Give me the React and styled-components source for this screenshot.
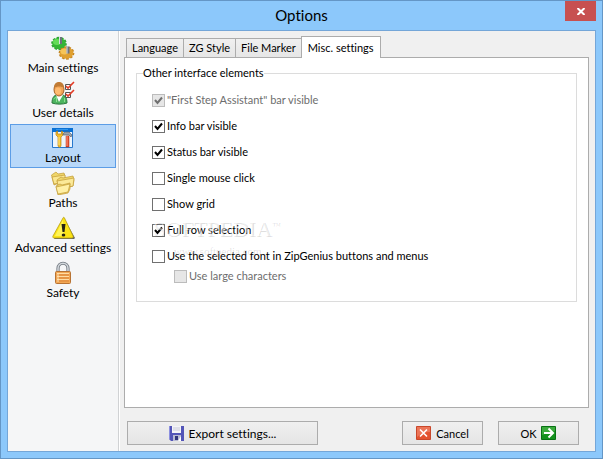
import React, { useState } from 'react'
import styled, { createGlobalStyle, css } from 'styled-components'

const GlobalStyle = createGlobalStyle`
  * {
    box-sizing: border-box;
  }
  body {
    margin: 0;
    font-family: Lato, 'Open Sans', sans-serif;
    font-size: 11px;
    font-variant-ligatures: none;
    color: #000;
  }
  button {
    font: inherit;
    font-variant-ligatures: none;
    color: inherit;
  }
`

const Window = styled.div`
  display: flex;
  flex-direction: column;
  min-height: 100vh;
  padding: 0 6px 6px;
  border: 1px solid #6496c6;
  background-color: #8cc8fb;
`

const TitleBar = styled.header`
  display: grid;
  grid-template-columns: 31px 1fr 31px;
  align-items: start;
  height: 29px;
`

const Title = styled.h1`
  grid-column: 2;
  margin: 0;
  font-size: 15px;
  font-weight: normal;
  line-height: 29px;
  text-align: center;
`

const CloseButton = styled.button`
  display: grid;
  place-items: center;
  height: 20px;
  padding: 0;
  border: 0;
  background-color: #c75050;
`

const Client = styled.div`
  flex: 1;
  display: flex;
  border: 1px solid #74a6d8;
  background-color: #f0f0f0;
`

const Sidebar = styled.nav`
  display: flex;
  flex-direction: column;
  gap: 1px;
  width: 111px;
  padding: 3px 2px;
  border-right: 1px solid #d0d2d4;
  background-color: #f5f6f7;
`

const NavItem = styled.button`
  display: flex;
  flex-direction: column;
  align-items: center;
  padding: 1px 0;
  border: 1px solid transparent;
  background: none;
  font-size: 12px;
  line-height: 16px;
  white-space: nowrap;

  ${props => props.$selected && css`
    border-color: #5c9de6;
    background-color: #b8d8f9;
  `}
`

const Main = styled.main`
  flex: 1;
  display: flex;
  flex-direction: column;
  padding: 5px 6px 6px 4px;
  border-left: 1px solid #fff;
`

const TabList = styled.div`
  display: flex;
  align-items: flex-end;
  padding-left: 2px;
`

const Tab = styled.button`
  height: 19px;
  margin-right: -1px;
  padding: 0 5px;
  border: 1px solid #acacac;
  border-bottom: 0;
  background: linear-gradient(#f0f0f0, #e6e6e6);
  line-height: 18px;
  white-space: nowrap;

  ${props => props.$selected && css`
    z-index: 1;
    height: 22px;
    margin-bottom: -1px;
    padding: 0 6px;
    background: #fff;
  `}
`

const Panel = styled.div`
  flex: 1;
  padding: 7px 11px;
  border: 1px solid #acacac;
  background-color: #fff;
`

const Group = styled.fieldset`
  position: relative;
  min-height: 237px;
  margin: 0;
  padding: 11px 15px;
  border: 1px solid #dcdcdc;
`

const Legend = styled.legend`
  margin-left: -9px;
  padding: 0;
  line-height: 16px;
`

const OptionList = styled.div`
  display: flex;
  flex-direction: column;
  align-items: flex-start;
  gap: 10px;
`

const SubOptions = styled.div`
  padding: 4px 0 0 22px;
`

const Option = styled.label`
  display: flex;
  align-items: center;
  gap: 2px;
  line-height: 16px;
  color: ${props => (props.$disabled ? '#6d6d6d' : '#000')};
`

const Box = styled.span`
  display: grid;

  > * {
    grid-area: 1 / 1;
  }
  svg {
    pointer-events: none;
    visibility: hidden;
  }
  input:checked + svg {
    visibility: visible;
  }
`

const Tick = styled.input`
  appearance: none;
  width: 13px;
  height: 13px;
  margin: 0;
  border: 1px solid #707070;
  background-color: #fff;

  &:disabled {
    border-color: #bcbcbc;
    background-color: #e6e6e6;
  }
`

const Watermark = styled.div`
  position: absolute;
  top: 136px;
  left: 16px;
  font-family: 'Liberation Serif', serif;
  font-size: 22px;
  line-height: 24px;
  text-align: center;
  color: rgba(255, 255, 255, 0.5);
  text-shadow: 1px 1px 0 rgba(0, 0, 0, 0.14);
  pointer-events: none;

  sup {
    font-size: 9px;
    line-height: 9px;
  }
  small {
    display: block;
    font-size: 11px;
    line-height: 18px;
  }
`

const Footer = styled.footer`
  display: flex;
  gap: 15px;
  padding: 13px 10px 0 3px;
`

const Button = styled.button`
  display: flex;
  align-items: center;
  justify-content: center;
  gap: 4px;
  flex: ${props => (props.$wide ? '0 1 191px' : '0 0 81px')};
  height: 24px;
  margin-right: ${props => (props.$wide ? 'auto' : '0')};
  padding: 0;
  border: 1px solid #acacac;
  background: linear-gradient(#f0f0f0, #e5e5e5);
  font-size: ${props => (props.$wide ? '12px' : '11px')};
`

const Icon = ({ size = 24, children }) => (
  <svg width={size} height={size} viewBox={`0 0 ${size} ${size}`} aria-hidden="true">
    {children}
  </svg>
)

const Gear = ({ x, y, fill, edge, light }) => (
  <g transform={`translate(${x} ${y})`}>
    {[0, 36, 72, 108, 144].map(angle => (
      <rect key={angle} x="-7.8" y="-1.4" width="15.6" height="2.8" fill={edge} transform={`scale(1 .85) rotate(${angle + 10})`} />
    ))}
    <ellipse rx="6.8" ry="5.8" fill={fill} />
    <ellipse cx="-2" cy="-1.5" rx="4" ry="3" fill={light} />
    <rect x="0" y="-6.5" width="3" height="7" fill="#6d727c" />
    <rect x="0" y="-6.5" width="1" height="7" fill="#d9dce5" />
  </g>
)

const GearsIcon = () => (
  <Icon>
    <Gear x={8} y={7.5} fill="#35b536" edge="#2da334" light="#63dc58" />
    <Gear x={15.5} y={17} fill="#e0a030" edge="#c3831f" light="#f6c457" />
  </Icon>
)

const UserIcon = () => (
  <Icon>
    <path d="M1 22c0-5 2-8 5-8h5c3 0 5 3 5 8-4 1.500-11 1.500-15 0z" fill="#4cb45f" stroke="#2b783d" />
    <path d="M5 14l3 7 4-7z" fill="#fff" />
    <path d="M2.500 18l3-2v5M13.500 21v-4" fill="none" stroke="#8bdd91" />
    <ellipse cx="8" cy="8.500" rx="5" ry="6.500" fill="#f2a355" stroke="#a76327" />
    <path d="M3 7c0-4 2-6 5-6s5 2 5 6c-3-2-7-2-10 0z" fill="#c17b35" />
    <ellipse cx="7" cy="10" rx="3" ry="3.500" fill="#ffbb70" />
    <path d="M14.500 3.500h5v5h-5zM14.500 11.500h5v5h-5z" fill="#fff" stroke="#555" />
    <path d="M15 5l2 2 6-6M15 13l2 2 6-6" fill="none" stroke="#e43b25" strokeWidth="1.600" />
  </Icon>
)

const LayoutIcon = () => (
  <Icon>
    <path d="M1.500 2.500h20v19h-20z" fill="#eef5fc" stroke="#2878cd" />
    <path d="M1 2h21v4H1z" fill="#0970d3" />
    <path d="M5 3h12v1H5z" fill="#2f94ed" />
    <path d="M5 6v3l2 2v8c0 3 3 3 3 0v-8l2-2V6l-1.500-1v3h-4V5z" fill="#f5bf29" stroke="#b98217" strokeWidth=".7" />
    <path d="M8 11v8" stroke="#ffe681" />
    <path d="M12 8c1-2 3-2 6-2l3 3-1 2-2-2h-6z" fill="#9ba4ae" stroke="#59616c" strokeWidth=".7" />
    <path d="M15 10h3v11h-3z" fill="#e04a2e" stroke="#a9321e" strokeWidth=".5" />
    <path d="M16 10v10" stroke="#ff957b" />
  </Icon>
)

const FoldersIcon = () => (
  <Icon>
    <g fill="#efd66a" stroke="#c29b36" strokeWidth=".7">
      <path d="M.500 4L5 1l2 2 6-1 1 3-1 5-10 4z" />
      <path d="M1 6l13-2v7L3 13z" fill="#fae790" />
      <path d="M6 9l4-3 2 1 10-2 1 4-1 6-14 4z" />
      <path d="M6 10l17-3-1 8-14 3z" fill="#fbe998" />
      <path d="M5 15l4-2 2 1 8-2v6l-2 4-10 2z" />
      <path d="M5 16l14-3-2 8-10 2z" fill="#fff0a5" />
    </g>
  </Icon>
)

const WarningIcon = () => (
  <Icon>
    <path d="M13 2l11 20-1 1H3z" fill="#65655f" />
    <path d="M12 2c.500-1 1-1 1.500 0L22 20c.500 1 0 2-1 2H3c-1 0-1.500-1-1-2z" fill="#fbe315" stroke="#b8a015" strokeWidth=".8" />
    <path d="M12 4L4 20h9z" fill="#fff457" />
    <path d="M10.500 8h4l-1 8h-2z" fill="#272414" />
    <ellipse cx="12.500" cy="19" rx="1.800" ry="1.500" fill="#272414" />
  </Icon>
)

const LockIcon = () => (
  <Icon>
    <path d="M7 12V7.500c0-7 10-7 10 0V12" fill="none" stroke="#727981" strokeWidth="3.200" />
    <path d="M7 12V7.500c0-7 10-7 10 0V12" fill="none" stroke="#d3d8dd" strokeWidth="1.500" />
    <rect x="4.500" y="10.500" width="15" height="12" rx="1" fill="#f3a855" stroke="#b77334" />
    <path d="M6 12.500h12M6 15.500h12M6 18.500h12" stroke="#ffdda4" />
    <path d="M6 14h12M6 17h12M6 20h12" stroke="#d98338" />
    <path d="M7 12v9" stroke="#ffe5b7" />
  </Icon>
)

const DiskIcon = () => (
  <Icon size={16}>
    <path d="M0 1h15v15H2l-2-2z" fill="#5355b8" />
    <path d="M0 1h1v13H0z" fill="#8c90e0" />
    <path d="M3 1h9v7H3z" fill="#f4f4f8" />
    <path d="M4 3h7M4 5h7" stroke="#c8cad8" />
    <path d="M4 10h8v6H4z" fill="#b8bbd4" />
    <path d="M6 11h3v4H6z" fill="#30357b" />
    <path d="M9 16l3-5v5z" fill="#fff" />
  </Icon>
)

const CancelIcon = () => (
  <Icon size={16}>
    <path d="M.500 1.500h14v13H.500z" fill="#e35330" stroke="#c9472a" />
    <path d="M1 2h13v5C9 7 4 9 1 12z" fill="#ec7558" />
    <path d="M4 4.500l7 7M11 4.500l-7 7" stroke="#fff" strokeWidth="1.600" />
  </Icon>
)

const OkIcon = () => (
  <Icon size={16}>
    <path d="M.500 1.500h14v13H.500z" fill="#14911d" stroke="#087113" />
    <path d="M1 2h13v4L1 10z" fill="#3baa3c" />
    <path d="M3 8h8M7.500 3.500L12 8l-4.500 4.500" fill="none" stroke="#fff" strokeWidth="2" />
  </Icon>
)

const sections = [
  { label: 'Main settings', icon: <GearsIcon /> },
  { label: 'User details', icon: <UserIcon /> },
  { label: 'Layout', icon: <LayoutIcon /> },
  { label: 'Paths', icon: <FoldersIcon /> },
  { label: 'Advanced settings', icon: <WarningIcon /> },
  { label: 'Safety', icon: <LockIcon /> },
]

const tabs = ['Language', 'ZG Style', 'File Marker', 'Misc. settings']

const options = [
  { label: '"First Step Assistant" bar visible', checked: true, disabled: true },
  { label: 'Info bar visible', checked: true },
  { label: 'Status bar visible', checked: true },
  { label: 'Single mouse click' },
  { label: 'Show grid' },
  { label: 'Full row selection', checked: true },
  { label: 'Use the selected font in ZipGenius buttons and menus' },
]

const CheckOption = ({ label, checked, disabled }) => (
  <Option $disabled={disabled}>
    <Box>
      <Tick type="checkbox" defaultChecked={checked} disabled={disabled} />
      <Icon size={13}>
        <path d="M3 6l2.500 3L10 3.500" fill="none" stroke={disabled ? '#707070' : '#000'} strokeWidth="2" />
      </Icon>
    </Box>
    {label}
  </Option>
)

const App = () => {
  const [section, setSection] = useState('Layout')
  const [tab, setTab] = useState('Misc. settings')

  return (
    <Window>
      <GlobalStyle />
      <TitleBar>
        <Title>Options</Title>
        <CloseButton type="button" aria-label="Close">
          <svg width="8" height="7" viewBox="0 0 8 7">
            <path d="M.500 0l7 7M7.500 0l-7 7" stroke="#fff" strokeWidth="2" />
          </svg>
        </CloseButton>
      </TitleBar>
      <Client>
        <Sidebar>
          {sections.map(({ label, icon }) => (
            <NavItem key={label} type="button" $selected={label === section} onClick={() => setSection(label)}>
              {icon}
              {label}
            </NavItem>
          ))}
        </Sidebar>
        <Main>
          <TabList role="tablist">
            {tabs.map(label => (
              <Tab
                key={label}
                type="button"
                role="tab"
                aria-selected={label === tab}
                $selected={label === tab}
                onClick={() => setTab(label)}
              >
                {label}
              </Tab>
            ))}
          </TabList>
          <Panel role="tabpanel">
            <Group>
              <Legend>Other interface elements</Legend>
              <OptionList>
                {options.map(option => <CheckOption key={option.label} {...option} />)}
              </OptionList>
              <SubOptions>
                <CheckOption label="Use large characters" disabled />
              </SubOptions>
              <Watermark aria-hidden="true">
                SOFTPEDIA<sup>™</sup>
                <small>www.softpedia.com</small>
              </Watermark>
            </Group>
          </Panel>
          <Footer>
            <Button type="button" $wide><DiskIcon />Export settings...</Button>
            <Button type="button"><CancelIcon />Cancel</Button>
            <Button type="button">OK<OkIcon /></Button>
          </Footer>
        </Main>
      </Client>
    </Window>
  )
}

export default App
